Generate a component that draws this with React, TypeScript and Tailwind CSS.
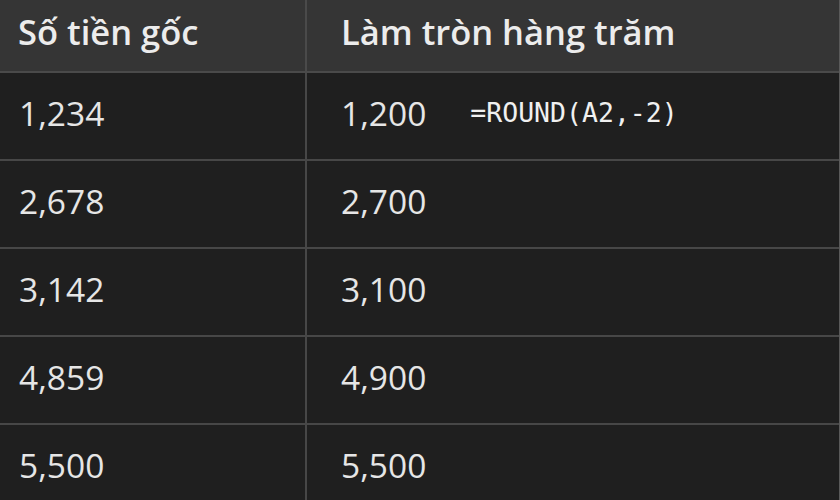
import React from 'react';

const rows = [
  { goc: '1,234', tron: '1,200', formula: '=ROUND(A2,-2)' },
  { goc: '2,678', tron: '2,700' },
  { goc: '3,142', tron: '3,100' },
  { goc: '4,859', tron: '4,900' },
  { goc: '5,500', tron: '5,500' },
];

export default function App() {
  return (
    <div
      className="w-[840px] h-[500px] overflow-hidden bg-[#1f1f1f] text-[#e6e6e6] border-r border-[#5a5a5a]"
      style={{ fontFamily: '"Open Sans", "Noto Sans", sans-serif' }}
    >
      {/* header */}
      <div className="grid grid-cols-[305px_2px_1fr] h-[73px] bg-[#353535] border-b-2 border-[#4a4a4a]">
        <div className="flex items-center pl-[18px] pb-[8px] text-[34.5px] font-semibold text-[#ececec]">
          Số tiền gốc
        </div>
        <div className="bg-[#4a4a4a]" />
        <div className="flex items-center pl-[34px] pb-[8px] text-[34.5px] font-semibold text-[#ececec]">
          Làm tròn hàng trăm
        </div>
      </div>

      {/* rows */}
      {rows.map((r, i) => (
        <div
          key={i}
          className="grid grid-cols-[305px_2px_1fr] h-[88px] border-b-2 border-[#474747]"
        >
          <div className="flex items-center pl-[19px] pb-[6px] text-[33.5px]">{r.goc}</div>
          <div className="bg-[#474747]" />
          <div className="flex items-center pl-[34px] pb-[6px] text-[33.5px]">
            <span>{r.tron}</span>
            {r.formula && (
              <span
                className="ml-[44px] text-[26.5px] text-[#f0f0f0]"
                style={{ fontFamily: '"DejaVu Sans Mono", "Liberation Mono", monospace' }}
              >
                {r.formula}
              </span>
            )}
          </div>
        </div>
      ))}
    </div>
  );
}
